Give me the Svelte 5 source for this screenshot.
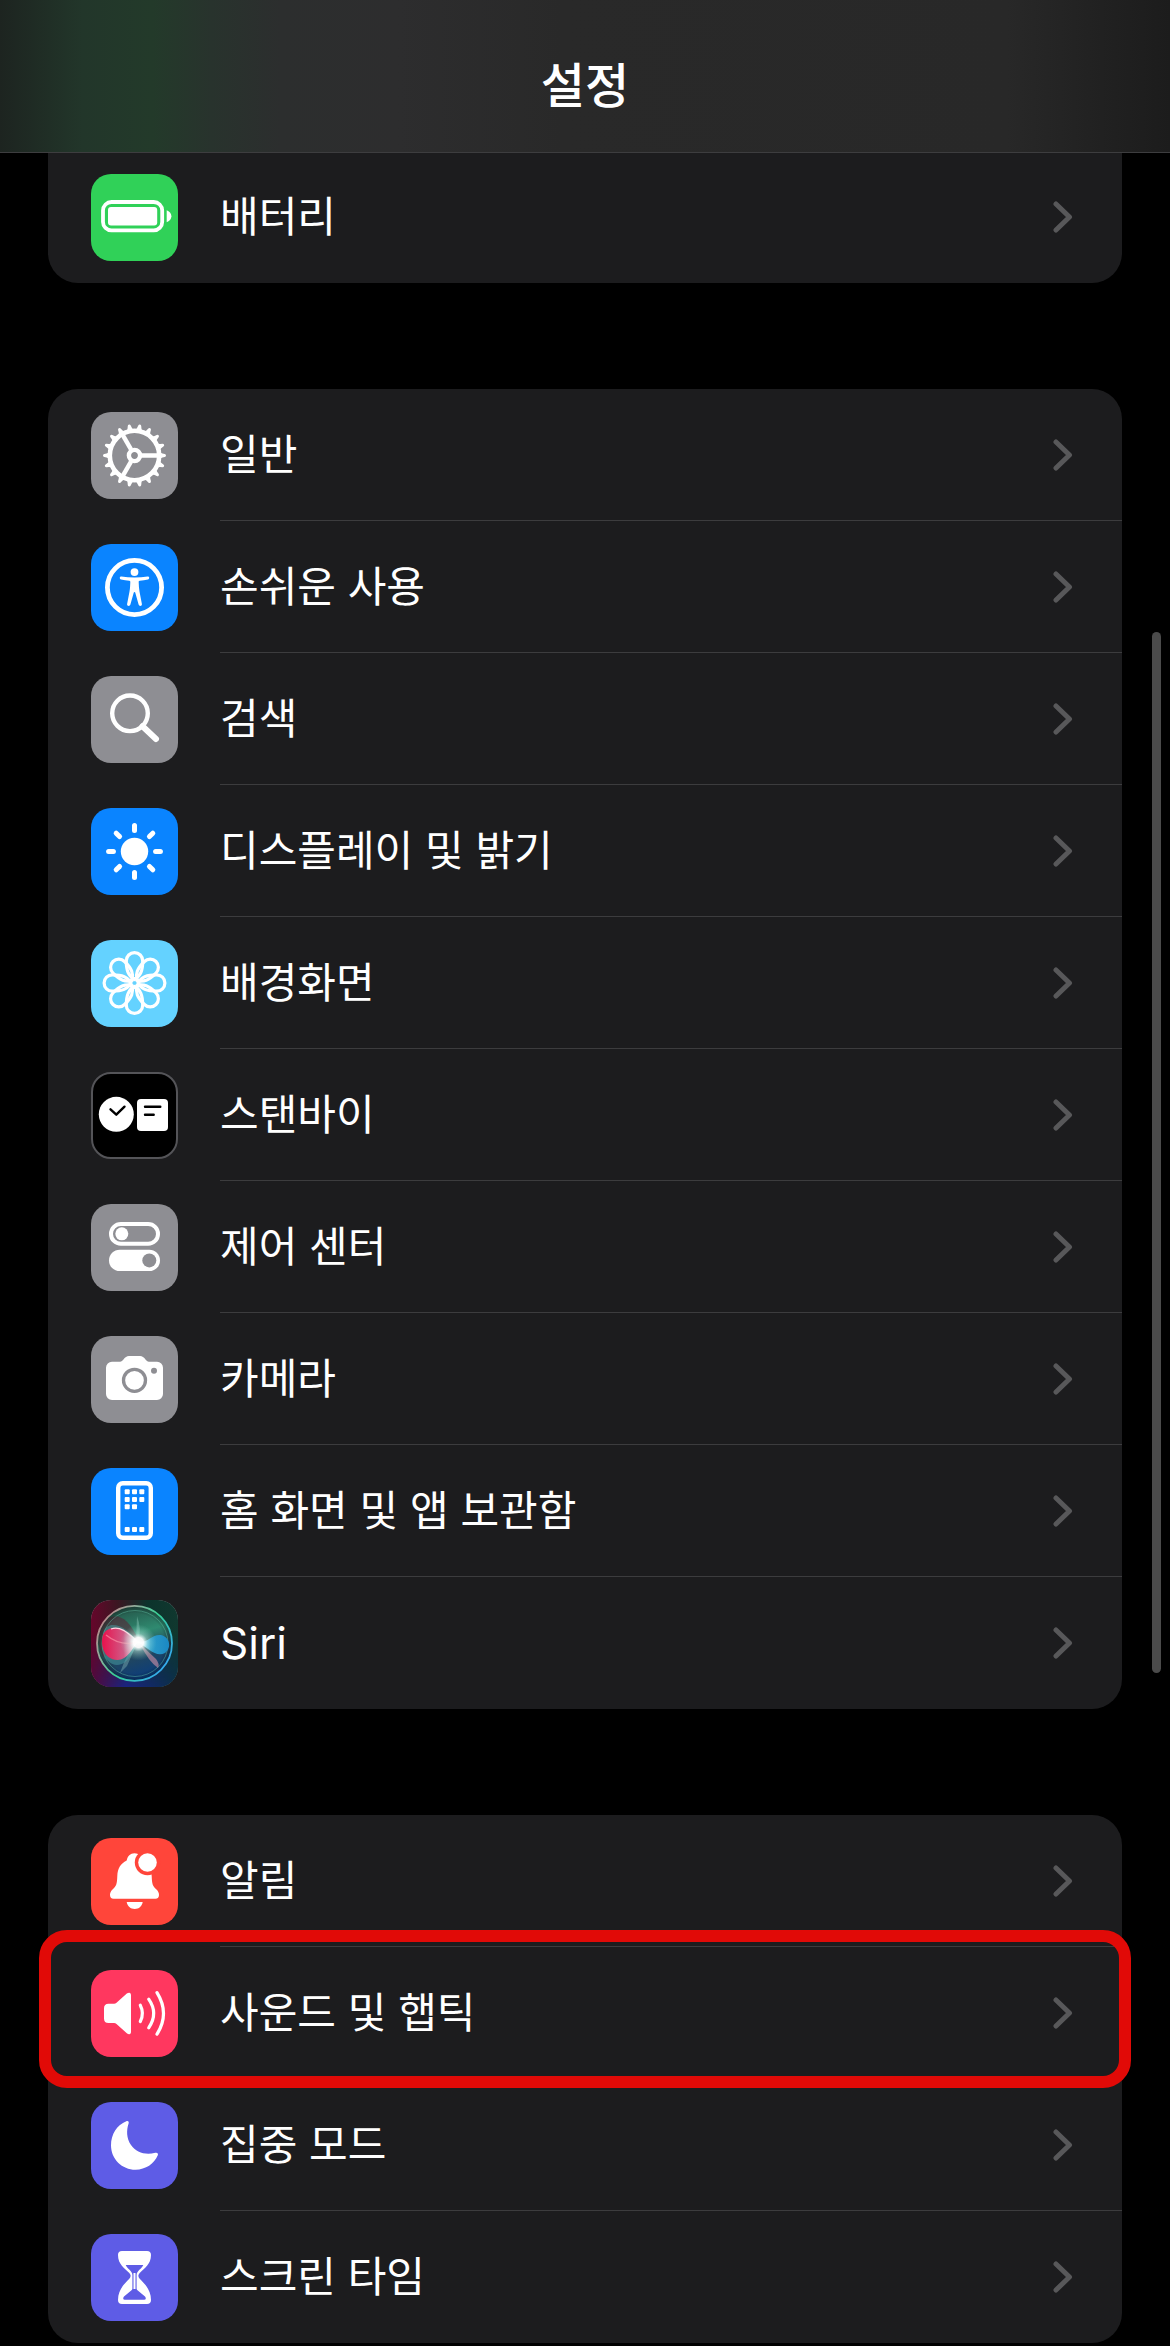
<script>
  const groups = [
    [
      { icon: 'battery', label: '배터리' }
    ],
    [
      { icon: 'general', label: '일반' },
      { icon: 'accessibility', label: '손쉬운 사용' },
      { icon: 'search', label: '검색' },
      { icon: 'display', label: '디스플레이 및 밝기' },
      { icon: 'wallpaper', label: '배경화면' },
      { icon: 'standby', label: '스탠바이' },
      { icon: 'control', label: '제어 센터' },
      { icon: 'camera', label: '카메라' },
      { icon: 'home', label: '홈 화면 및 앱 보관함' },
      { icon: 'siri', label: 'Siri', latin: true }
    ],
    [
      { icon: 'notifications', label: '알림' },
      { icon: 'sound', label: '사운드 및 햅틱', marked: true },
      { icon: 'focus', label: '집중 모드' },
      { icon: 'screentime', label: '스크린 타임' }
    ]
  ]

  const teeth = Array.from({ length: 18 }, (_, i) => i * 20)
  const eighths = Array.from({ length: 8 }, (_, i) => i * 45)
  const apps = [
    [33.7, 21.3], [41, 21.3], [48.3, 21.3],
    [33.7, 29], [41, 29], [48.3, 29],
    [33.7, 36.3], [41, 36.3],
    [33.7, 59], [41, 59], [48.3, 59]
  ]
</script>

{#snippet glyph(name)}
  <svg viewBox="0 0 87 87" fill="#fff" aria-hidden="true">
    {#if name === 'battery'}
      <rect x="12" y="28" width="59.2" height="28.4" rx="8.5" fill="none" stroke="#fff" stroke-width="3.8" />
      <rect x="17" y="33" width="49.2" height="18.6" rx="3" />
      <path d="M75.7 36.2c2.6.8 4.7 3.2 4.7 6s-2.1 5.2-4.7 6z" />
    {:else if name === 'general'}
      <g transform="translate(43.5 43.5)">
        {#each teeth as a}
          <path transform="rotate({a})" d="M25.5-3.1 28-2.1 30.2-1.5Q31.5-1.1 31.5 0T30.2 1.5L28 2.1 25.5 3.1z" />
        {/each}
        <g fill="none" stroke="#fff">
          <circle r="24.7" stroke-width="4.6" />
          <circle r="5.6" stroke-width="4.4" />
          {#each [0, 120, 240] as a}
            <path transform="rotate({a})" d="M7 0H24" stroke-width="4.4" />
          {/each}
        </g>
      </g>
    {:else if name === 'accessibility'}
      <circle cx="43.5" cy="43.5" r="27.1" fill="none" stroke="#fff" stroke-width="4.8" />
      <circle cx="43.5" cy="28.1" r="3.9" />
      <path d="M30.4 32.5c4.3.7 8.6 1.1 13.1 1.1s8.800-.4 13.100-1.100c1.900-.3 2.200 2.500.4 2.900-2.800.6-5.500 1-8.300 1.400-.8.100-1.100.6-1 1.400.2 3.200.2 6.300.8 9.400l2.400 12.300c.4 2.200-2.700 2.800-3.300.7l-3.400-12c-.2-.8-1.200-.8-1.400 0l-3.400 12c-.6 2.100-3.700 1.500-3.300-.7l2.400-12.300c.6-3.100.6-6.200.8-9.400.1-.8-.2-1.300-1-1.400-2.800-.4-5.500-.8-8.300-1.400-1.800-.4-1.500-3.200.4-2.900z" />
    {:else if name === 'search'}
      <g fill="none" stroke="#fff">
        <circle cx="39" cy="37.3" r="17.8" stroke-width="4.4" />
        <path d="M51.5 50.3 65 63" stroke-width="6" stroke-linecap="round" />
      </g>
    {:else if name === 'display'}
      <g transform="translate(43.5 43.5)">
        <circle r="13.7" />
        {#each eighths as a}
          <path transform="rotate({a})" d="M0-25.9V-21.1" stroke="#fff" stroke-width="5" stroke-linecap="round" />
        {/each}
      </g>
    {:else if name === 'wallpaper'}
      <g transform="translate(43.5 43)" fill="none" stroke="#fff" stroke-width="3.2">
        {#each eighths as a}
          <path transform="rotate({a})" d="M0-3.5C-6-7-8.2-12-8.2-22.2A8.2 8.2 0 0 1 8.2-22.2C8.2-12 6-7 0-3.5z" />
        {/each}
        <circle r="5" stroke-width="2" />
      </g>
    {:else if name === 'standby'}
      <circle cx="25.3" cy="42.3" r="17.5" />
      <rect x="46" y="27" width="31" height="32" rx="4" />
      <g fill="none" stroke="#000" stroke-width="2.4" stroke-linecap="round" stroke-linejoin="round">
        <path d="M19.5 37.3 25.3 42.7 33.5 34.7" />
        <path d="M54 34.7H69.3M54 42.7H62.7" />
      </g>
    {:else if name === 'control'}
      <rect x="20" y="20" width="47" height="19.8" rx="9.9" fill="none" stroke="#fff" stroke-width="4" />
      <circle cx="30.8" cy="29.8" r="6.5" />
      <rect x="18" y="45.7" width="51" height="21.4" rx="10.7" />
      <circle cx="58.3" cy="56.4" r="7" fill="#8e8e93" />
    {:else if name === 'camera'}
      <path d="M21 25.7h8c3.5 0 4.2-5.7 9-5.7h11c4.8 0 5.5 5.7 9 5.7h8a6 6 0 0 1 6 6V58a6 6 0 0 1-6 6H21a6 6 0 0 1-6-6V31.7a6 6 0 0 1 6-6z" />
      <circle cx="43.5" cy="44.3" r="11" fill="none" stroke="#8e8e93" stroke-width="3.3" />
      <circle cx="63" cy="34.7" r="3" fill="#8e8e93" />
    {:else if name === 'home'}
      <rect x="27.2" y="15.2" width="32.6" height="54.5" rx="4.5" fill="none" stroke="#fff" stroke-width="4.4" />
      {#each apps as [x, y]}
        <rect {x} {y} width="5" height="5" rx="1" />
      {/each}
    {:else if name === 'siri'}
      <defs>
        <linearGradient id="siri-bg" x2="1" y2="0">
          <stop offset="0" stop-color="#66062b" />
          <stop offset=".3" stop-color="#3c1622" />
          <stop offset=".65" stop-color="#0c332c" />
          <stop offset="1" stop-color="#10382f" />
        </linearGradient>
        <linearGradient id="siri-low" x2="1" y2="0">
          <stop offset="0" stop-color="#52083c" />
          <stop offset=".4" stop-color="#1a2480" />
          <stop offset="1" stop-color="#0a2f48" />
        </linearGradient>
        <linearGradient id="siri-fade" x2="0" y2="1">
          <stop offset=".4" stop-color="#000" />
          <stop offset="1" stop-color="#fff" />
        </linearGradient>
        <mask id="siri-mask"><rect width="87" height="87" fill="url(#siri-fade)" /></mask>
        <linearGradient id="siri-orb" x1=".3" x2=".6" y2="1">
          <stop offset="0" stop-color="#245045" />
          <stop offset=".4" stop-color="#2f8a70" />
          <stop offset=".65" stop-color="#23475c" />
          <stop offset="1" stop-color="#093c80" />
        </linearGradient>
        <linearGradient id="siri-ring" x2="1" y2=".7">
          <stop offset="0" stop-color="#d06f80" />
          <stop offset=".35" stop-color="#8fae9c" />
          <stop offset=".6" stop-color="#36d095" />
          <stop offset="1" stop-color="#35a8ee" />
        </linearGradient>
        <linearGradient id="siri-red">
          <stop offset="0" stop-color="#e8114c" />
          <stop offset=".6" stop-color="#d05a86" />
          <stop offset="1" stop-color="#fff" />
        </linearGradient>
        <linearGradient id="siri-blue">
          <stop offset="0" stop-color="#d8f6ff" />
          <stop offset=".4" stop-color="#2c9cc9" />
          <stop offset="1" stop-color="#1a88c4" />
        </linearGradient>
        <radialGradient id="siri-shade">
          <stop offset=".8" stop-color="#000" stop-opacity="0" />
          <stop offset="1" stop-color="#000" stop-opacity=".35" />
        </radialGradient>
        <radialGradient id="siri-glow">
          <stop offset="0" stop-color="#fff" />
          <stop offset=".28" stop-color="#fff" stop-opacity=".95" />
          <stop offset=".5" stop-color="#d5fff4" stop-opacity=".4" />
          <stop offset="1" stop-color="#8fe0d0" stop-opacity="0" />
        </radialGradient>
      </defs>
      <rect width="87" height="87" fill="url(#siri-bg)" />
      <rect width="87" height="87" fill="url(#siri-low)" mask="url(#siri-mask)" />
      <circle cx="43.5" cy="43.3" r="37.5" fill="url(#siri-orb)" />
      <path d="M9 28C19 10 35 12 47 39L12 57Q4 43 9 28z" fill="#5e1830" opacity=".5" />
      <circle cx="43.5" cy="43.3" r="37.5" fill="url(#siri-shade)" />
      <circle cx="44" cy="43.5" r="33" fill="none" stroke="#6bd0b5" stroke-width=".8" opacity=".5" />
      <path d="M46 16Q51 29 47 41L36 66 29 73Q35 55 45 42z" fill="#aee7da" opacity=".3" />
      <path d="M49 44 65 59q4 5 2 9-9-6-18-24z" fill="#d692a8" opacity=".6" />
      <path d="M47 42C37 27 16 17 12 34c-3 16 2 30 14 31 12 0 17-16 21-23z" fill="#4ba8b0" opacity=".45" />
      <path d="M47 42C37 30 20 22 12.5 34c-4 9 0 26 14 26 10 0 15-12 20.5-18z" fill="url(#siri-red)" />
      <path d="M15 35q15 12 32 7" fill="none" stroke="#ff9bad" stroke-width="1.5" opacity=".6" />
      <path d="M47 42c10 1 14-8 23-7 9 2 11 13 4 18-9 5-17-5-27-11z" fill="url(#siri-blue)" />
      <path d="M20 29c10-4 19 6 27 13" fill="none" stroke="#ffd3df" stroke-width="1.3" />
      <circle cx="47.5" cy="42.5" r="18" fill="url(#siri-glow)" />
      <circle cx="43.5" cy="43.3" r="37.5" fill="none" stroke="url(#siri-ring)" stroke-width="1.8" />
    {:else if name === 'notifications'}
      <path d="M35.7 22.5C36.5 18.2 39.3 15.3 43.5 15.3S50.5 18.2 51.3 22.5C57.5 25.5 60.3 30.5 60.7 38 61 46 61.5 48 65.5 51.5 67.3 53.2 68 55 68 57c0 2.3-1.2 3.7-3.5 3.7h-42C20.2 60.7 19 59.3 19 57c0-2 .7-3.8 2.5-5.5C25.5 48 26 46 26.3 38c.4-7.5 3.2-12.5 9.4-15.5z" />
      <path d="M35.7 64h16c-.6 4.2-3.8 7-8 7s-7.4-2.8-8-7z" />
      <circle cx="56.5" cy="24.5" r="12.7" fill="#ff453a" />
      <circle cx="56.5" cy="24.5" r="9.3" />
    {:else if name === 'sound'}
      <path d="M17.5 33.8H23q1.5 0 2.5-1L35.8 23.5Q37.3 22.500 38.500 22.700 40 23 40 25V62q0 2-1.500 2.200-1.200.2-2.700-.9L25.500 54q-1-1-2.500-1H17.500Q13 53 13 48.500V38.300Q13 33.800 17.500 33.800z" />
      <g fill="none" stroke="#fff" stroke-width="3.2" stroke-linecap="round">
        <path d="M49.3 35.2Q53.5 43.4 49.3 51.6" />
        <path d="M57.7 29.2Q67.7 43.5 57.7 57.8" />
        <path d="M66 22.7Q79 43.5 66 64.2" />
      </g>
    {:else if name === 'focus'}
      <path d="M35.3 19.3c1.9-.7 2.9.4 2.3 2.1-2.3 6.6-2.2 15 2.4 21.6 5.2 7.4 14.2 10.4 24.3 7.8 2-.5 3.2.7 2.5 2.5C63.3 61.8 54.6 67.7 44.6 67.7 31 67.7 20 57 20 43.2 20 32.5 26 23 35.3 19.3z" />
    {:else if name === 'screentime'}
      <path d="M31 17H56c2.6 0 4 1.4 4 4 0 9.5-6.7 13.2-11.3 18-1.8 1.9-1.8 3.8 0 5.7C53.3 49.5 60 55.5 60 66c0 2.6-1.4 4-4 4H31c-2.6 0-4-1.4-4-4 0-10.5 6.7-16.5 11.3-21.3 1.8-1.9 1.8-3.8 0-5.7C33.7 34.2 27 30.5 27 21c0-2.6 1.4-4 4-4z" />
      <path d="M34.7 31H52.3C51 34.5 45.6 37 45.6 41V54.5Q45.6 55.5 46.5 56.3L54 62.5Q56 65.5 53 65.7H34Q31 65.5 33 62.5L40.5 56.3Q41.4 55.5 41.4 54.5V41C41.4 37 36 34.5 34.7 31z" fill="#5e5ce6" />
      <path d="M42.5 39h2V55h-2z" />
    {/if}
  </svg>
{/snippet}

<div class="settings">
  <header>
    <h1>설정</h1>
  </header>

  <main>
    {#each groups as rows}
      <nav class="group">
        {#each rows as row}
          <a class="row" class:marked={row.marked} href="#{row.icon}">
            <span class="icon {row.icon}">{@render glyph(row.icon)}</span>
            <span class="body">
              <span class="label" class:latin={row.latin}>{row.label}</span>
              <svg class="chevron" viewBox="0 0 20 32" aria-hidden="true">
                <path d="M3 3 16.5 16 3 29" />
              </svg>
            </span>
          </a>
        {/each}
      </nav>
    {/each}
  </main>

  <div class="scrollbar"></div>
</div>

<style>
  :global(body) {
    background: #000;
  }
  .settings {
    position: relative;
    overflow: hidden;
    background: #000;
    color: #fff;
    font-family: Inter, 'Noto Sans CJK KR', sans-serif;
  }
  header {
    position: relative;
    z-index: 2;
    box-sizing: border-box;
    height: 153px;
    padding-top: 34px;
    text-align: center;
    border-bottom: 1px solid #3d3d3f;
    background: linear-gradient(90deg, #1d2420 0%, #22362a 7%, #233a2a 13%, #28332d 18%, #2c2e2e 24%, #2d2d2e 34%, #292929 48%, #282828 86%, #1c1c1c 100%);
  }
  h1 {
    margin: 0;
    font-size: 48px;
    font-weight: 500;
    line-height: 104px;
  }
  main {
    display: flex;
    flex-direction: column;
    gap: 106px;
    margin-top: -2px;
    padding: 0 48px 3px;
  }
  .group {
    border-radius: 30px;
    background: #1c1c1e;
  }
  .group:first-child {
    border-radius: 0 0 30px 30px;
  }
  .row {
    position: relative;
    display: flex;
    color: inherit;
    text-decoration: none;
  }
  .icon {
    box-sizing: border-box;
    flex: none;
    width: 87px;
    height: 87px;
    margin: 23px 42px 22px 43px;
    border-radius: 20px;
    overflow: hidden;
    background: #8e8e93;
  }
  .icon svg {
    display: block;
    width: 87px;
    height: 87px;
  }
  .battery { background: #30d158; }
  .accessibility, .display, .home { background: #0a84ff; }
  .wallpaper { background: #64d2ff; }
  .standby {
    background: #000;
    border: 2px solid #545458;
  }
  .standby svg { margin: -2px; }
  .notifications { background: #ff453a; }
  .sound { background: #ff375f; }
  .focus, .screentime { background: #5e5ce6; }
  .body {
    flex: 1;
    display: flex;
    align-items: center;
    justify-content: space-between;
    padding-right: 49px;
    border-bottom: 1px solid #3c3c3e;
  }
  .row:last-child .body {
    border-bottom-color: transparent;
  }
  .label {
    font-size: 42px;
    line-height: 60px;
  }
  .latin {
    font-size: 44px;
  }
  .chevron {
    width: 20px;
    height: 32px;
    fill: none;
    stroke: #58585a;
    stroke-width: 5;
    stroke-linecap: round;
    stroke-linejoin: round;
  }
  .marked::after {
    content: '';
    position: absolute;
    z-index: 1;
    inset: -17px -9px -9px;
    border: 12px solid #e10a07;
    border-radius: 28px;
  }
  .scrollbar {
    position: absolute;
    top: 632px;
    right: 9px;
    width: 9px;
    height: 1041px;
    border-radius: 5px;
    background: #4b4b4b;
  }
</style>
